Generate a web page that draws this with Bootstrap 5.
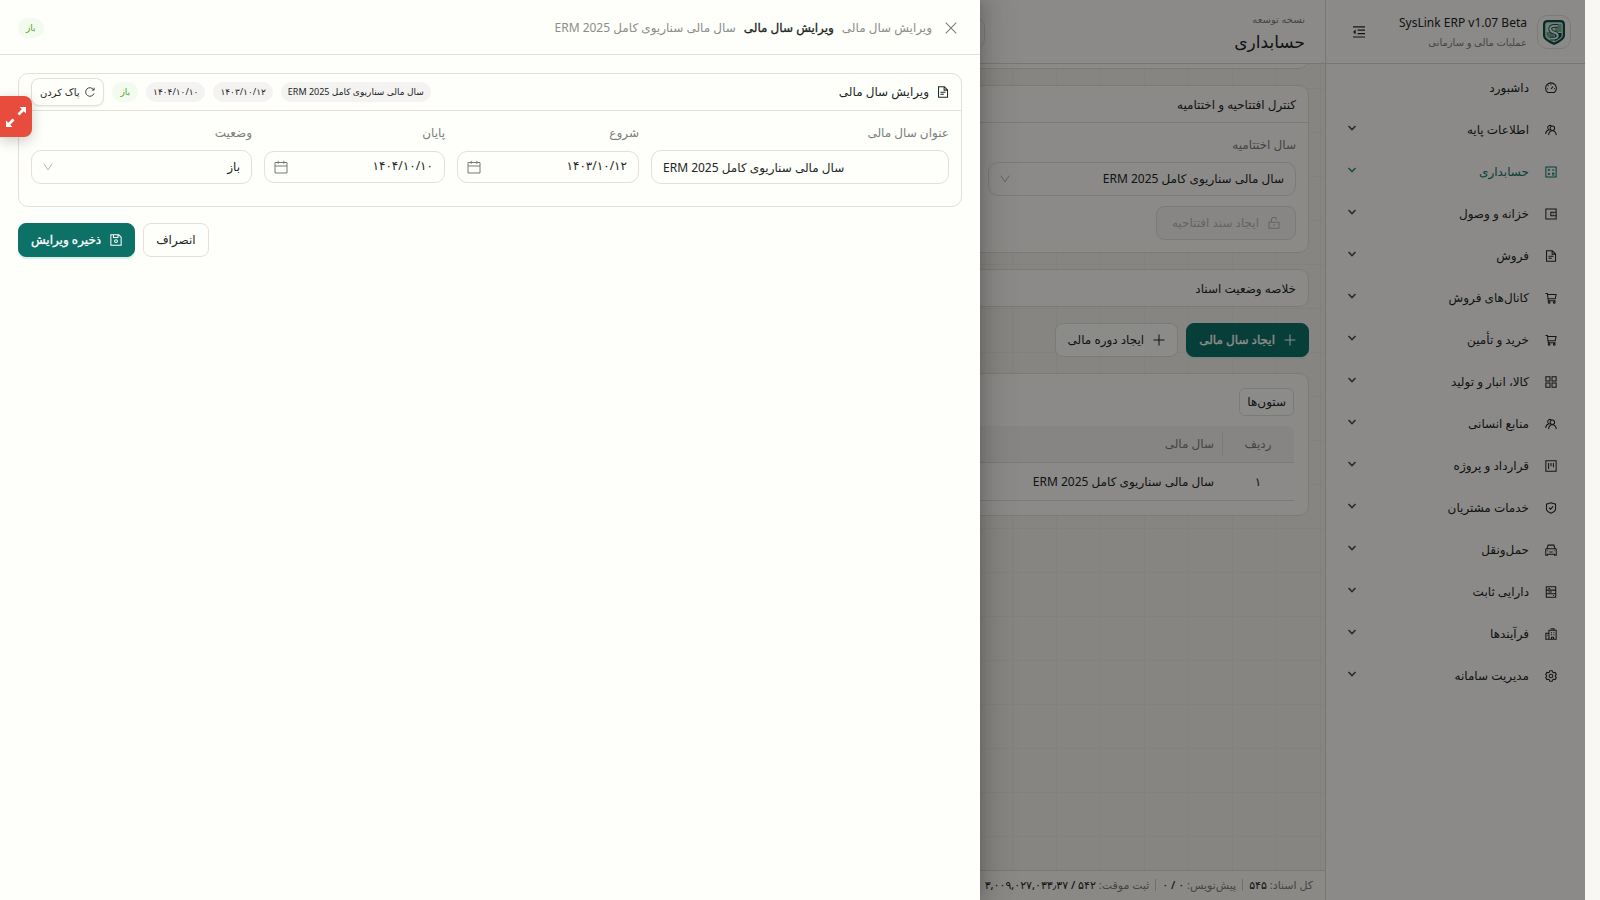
<!DOCTYPE html>
<html lang="fa" dir="rtl">
<head>
<meta charset="utf-8">
<meta name="viewport" content="width=device-width, initial-scale=1">
<title>SysLink ERP</title>
<link rel="stylesheet" href="https://cdn.jsdelivr.net/npm/bootstrap@5.3.0/dist/css/bootstrap.min.css">
<style>
:root{--line:#e4dfd8;--ink:#202624;--muted:#7b807d;--brand:#0d7168;--paper:#fefefb}
body{font-family:"Noto Sans","DejaVu Sans",sans-serif;font-size:12px;line-height:20px;color:var(--ink);background:#f8f7f3;padding-right:15px;min-height:100vh;overflow:hidden}
.ico{width:12px;height:12px;fill:none;stroke:currentColor;stroke-width:1.2;flex:none}
.shell{height:100vh;position:relative}
.side{width:260px;background:#fffcf9;border-left:1px solid #dcd7d0}
.bar{height:64px;border-bottom:1px solid #dcd7d0;flex:none;background:#fffcf9}
.side .bar{padding:0 14px 0 26px;gap:10px}
.side .bar .ico{width:14px;height:14px}
.logo{width:34px;height:34px;border:1px solid #e6ddcf;border-radius:10px}
.brandname{font-size:12px;line-height:20px}
.tiny{font-size:10px;line-height:18px;color:var(--muted)}
.menu{padding-top:3px}
.menu a{height:42px;padding:0 28px 0 21px;gap:16px;color:var(--ink);text-decoration:none}
.menu a.current{color:var(--brand)}
.menu .chev{width:10px;height:10px;stroke-width:1.6;margin-bottom:4px;opacity:.8}
.canvas{background-color:#f5f3ed;background-image:linear-gradient(#eeece6 1px,transparent 1px),linear-gradient(90deg,#eeece6 1px,transparent 1px);background-size:44px 44px;background-position:0 24px;overflow:hidden;padding:0 16px;gap:16px}
.main .bar{padding:2px 20px 0}
.heading{font-size:17px;line-height:28px;font-weight:400}
.firm{-webkit-text-stroke:.3px currentColor;font-weight:400}
.titles{width:320px;flex:none}
.finder{width:420px;height:32px;border:1px solid var(--line);border-radius:10px}
.panel{background:#fffcf9;border:1px solid var(--line);border-radius:10px;flex:none}
.panel-top{height:37px;padding:2px 12px 0;border-bottom:1px solid var(--line)}
.panel-top.alone{height:36px;border:0}
.scrolled{height:20px;margin-top:-15px}
.inner{padding:12px}
.tool{height:34px;border:1px solid var(--line);border-radius:8px;font-size:12px;line-height:20px;padding:0 12px;gap:9px;background:var(--paper);color:var(--ink)}
.tool.solid{background:var(--brand);border-color:var(--brand);color:#fff;box-shadow:0 2px 0 #d8f0e8}
.tool:disabled{background:#f6f4f0;color:#b9b6b2;border-color:var(--line);opacity:1;padding:0 15px;margin-top:10px}
.tool.cols{height:28px;padding:0 7px;border-radius:6px;margin-bottom:10px;display:block}
.table-panel{padding:14px}
.btn.tool:hover{background:#f4f3ee;color:var(--ink)}
.field{height:34px;border:1px solid var(--line);border-radius:10px;font-size:12px;padding:0 11px;background-color:transparent;color:var(--ink);width:100%}
.pick{appearance:none;padding-left:36px}
.holder{position:relative}
.holder .ico{position:absolute;left:10px;top:50%;transform:translateY(-50%);width:14px;height:14px;stroke-width:1;color:#767b78;pointer-events:none}
.holder .down{left:11px;width:12px;height:12px;stroke-width:.8;color:#b0b1ae}
.date{height:32px;padding-bottom:4px}
.lab{color:var(--muted);line-height:20px;margin-bottom:7px;display:block}
.four{display:grid;grid-template-columns:repeat(4,1fr);gap:12px}
.fields{display:grid;grid-template-columns:298fr 182fr 181fr 221fr;gap:12px;align-items:start;padding:12px 12px 22px}
.fields .holder{height:34px;display:flex;align-items:center}
.grid-table{border-collapse:separate;border-spacing:0}
.grid-table th{background:#f5f3ee;color:var(--muted);font-weight:400;height:37px;border-bottom:1px solid var(--line);padding:0 8px}
.grid-table td{height:38px;border-bottom:1px solid var(--line);padding:0 8px}
.grid-table th:first-child{border-top-right-radius:8px;background-image:linear-gradient(var(--line),var(--line));background-size:1px 22px;background-position:left center;background-repeat:no-repeat}
.grid-table th:first-child,.grid-table td:first-child{width:72px;text-align:center}
.status{height:30px;border-top:1px solid #dcd7d0;background:#fbf9f5;padding:0 12px 2px;font-size:11px;flex:none;gap:6px;color:var(--muted);white-space:nowrap}
.status b{color:var(--ink);font-weight:500}
.status .sep{width:1px;height:12px;background:#d0ccc6}
.veil{position:absolute;inset:0;background:rgba(0,0,0,.45)}
.sheet{position:absolute;inset:0 auto 0 0;width:980px;max-width:100%;background:var(--paper);box-shadow:6px 0 16px rgba(0,0,0,.12),3px 0 6px -4px rgba(0,0,0,.14),9px 0 28px 8px rgba(0,0,0,.07)}
.sheet-top{height:55px;border-bottom:1px solid var(--line);padding:2px 18px 0;gap:8px}
.sheet-top .x{border:0;background:none;padding:0 5px;color:#777b79;display:flex}
.soft{color:#8a8d8a}
.sheet-body{padding:18px}
.sheet .panel{background:transparent}
.sheet .panel-top{padding-top:0}
.pill{background:#f4f3f1;border-radius:10px;font-size:9px;line-height:20px;height:20px;padding:0 7px;white-space:nowrap}
.pill.ok{background:#f3fbee;color:#52a32c;padding:0 8px}
.tool.mini{height:28px;font-size:10px;padding:0 8px;box-shadow:0 1px 2px rgba(0,0,0,.06);gap:6px}
.mini .ico{width:10px;height:10px}
.flyout{position:absolute;left:0;top:96px;width:32px;height:41px;border:0;border-radius:0 8px 8px 0;background:#e74c3c;color:#fff;box-shadow:0 4px 14px rgba(0,0,0,.2);padding:0;display:flex;align-items:center;justify-content:center}
</style>
</head>
<body>
<svg class="d-none">
<symbol id="gauge" viewBox="0 0 14 14"><path d="M3 12.200a6.300 6.300 0 1 1 8 0z"/><path d="M7 8l2.400-2.600M7 2.600v1.200M3.200 4l.8.8M2.400 7.800h1.200M10.400 7.800h1.200"/></symbol>
<symbol id="people" viewBox="0 0 14 14"><circle cx="8.600" cy="5" r="2.600"/><path d="M4.200 13c.2-3 1.900-5.200 4.400-5.200s4.200 2.200 4.600 5.200M5.600 7A2.700 2.700 0 1 1 7.400 2.100M.8 11.600c.1-2.400 1.300-4.200 3.400-5"/></symbol>
<symbol id="book" viewBox="0 0 14 14"><path d="M1 1.200h12v11.600H1zM3.200 4.600h2.600M4.500 3.300v2.600M8.200 4.600h2.800M3.400 8.300l2.200 2.200M5.600 8.300l-2.200 2.200M8.200 8.600h2.800M8.200 10.400h2.800"/></symbol>
<symbol id="wallet" viewBox="0 0 14 14"><path d="M1 1.200h12v11.600H1zM13 5H6.800v4H13M9 7h1"/></symbol>
<symbol id="doc" viewBox="0 0 14 14"><path d="M1.800.8h6.700L12.300 4.600v8.600H1.800zM8.300.8v4h4M4 7.200h6M4 9.600h4"/></symbol>
<symbol id="cart" viewBox="0 0 14 14"><path d="M.6 1.800h2.200l1 8.400h8.600M3 3h9.900l-.9 5H3.600"/><circle cx="4.800" cy="12.200" r="1"/><circle cx="10.800" cy="12.200" r="1"/></symbol>
<symbol id="tiles" viewBox="0 0 14 14"><path d="M1 1h4.800v4.800H1zM8.200 1H13v4.800H8.200zM1 8.200h4.800V13H1zM8.200 8.200H13V13H8.200z"/></symbol>
<symbol id="board" viewBox="0 0 14 14"><path d="M1 1h12v12H1zM4.200 3.600v6.800M7 3.600v3.600M9.800 3.600v4.800" /></symbol>
<symbol id="shield" viewBox="0 0 14 14"><path d="M7 .8l5.300 1.700v6.500q-1 2.500-5.300 4.200Q2.700 11.500 1.700 9V2.500zM4.600 6.500l1.900 1.900 3-3.400"/></symbol>
<symbol id="car" viewBox="0 0 14 14"><path d="M2.200 5.800L3.600 1.300h6.800l1.400 4.500M.9 6l1-.5h10.200l1 .5v7h-2v-1H2.900v1h-2zM5 9.400h4M2.700 8h1M10.300 8h1"/></symbol>
<symbol id="server" viewBox="0 0 14 14"><path d="M1.500.8h11v12.400h-11zM1.500 4.800h11M1.500 9h11M4 2.900h2M4 7h4M9.500 11h1"/></symbol>
<symbol id="flow" viewBox="0 0 14 14"><path d="M4.600 2.600H13V13H4.600zM1 6h3.600v7H1zM6.600 1h4v1.600M7 5.500h1.200M9.800 5.500H11M7 8h1.200M9.800 8H11M7.600 13v-2.300h2.400V13M2.200 8.500h1"/></symbol>
<symbol id="gear" viewBox="0 0 14 14"><circle cx="7" cy="7" r="2.100"/><path d="M5.600.8h2.800l.5 1.700 1.200.7 1.700-.4 1.400 2.400L12 6.600v.8l1.200 1.400-1.400 2.400-1.700-.4-1.200.7-.5 1.700H5.600l-.5-1.700-1.200-.7-1.700.4L.8 8.800 2 7.400v-.8L.8 5.200l1.400-2.400 1.700.4 1.200-.7z"/></symbol>
<symbol id="fold" viewBox="0 0 14 14"><path d="M1 1.800h12M5.600 5.200H13M5.600 8.600H13M1 12h12"/><path d="M3.600 4.600v4.600L1 6.900z" fill="currentColor" stroke="none"/></symbol>
<symbol id="chev" viewBox="0 0 10 10"><path d="M1.500 3L5 6.500 8.500 3"/></symbol>
<symbol id="vee" viewBox="0 0 10 10"><path d="M1.500 2.200L5 7.400 8.500 2.200"/></symbol>
<symbol id="plus" viewBox="0 0 14 14"><path d="M7 .6v12.800M.6 7h12.800"/></symbol>
<symbol id="lock" viewBox="0 0 14 14"><path d="M1.200 6h11.600v7H1.200zM4 6V3.500a3 3 0 0 1 6-.3M7 8.600v2"/></symbol>
<symbol id="cal" viewBox="0 0 14 14"><path d="M1 2.500h12V13H1zM1 6h12M4.200.8v3M9.800.8v3"/></symbol>
<symbol id="save" viewBox="0 0 14 14"><path d="M1 1h9.200L13 3.800V13H1zM4 1.200v3h5.300v-3"/><circle cx="7" cy="8.300" r="1.700"/></symbol>
<symbol id="reload" viewBox="0 0 14 14"><path d="M12.600 9A6 6 0 1 1 12 3.800M12.800 1v3.300H9.500"/></symbol>
<symbol id="close" viewBox="0 0 14 14"><path d="M.8.8l12.400 12.400M13.200.8L.8 13.200"/></symbol>
</svg>
<div class="shell d-flex">
  <aside class="side d-flex flex-column">
    <div class="bar d-flex align-items-center">
      <svg class="logo" viewBox="0 0 34 34"><path d="M6.500 9q0-3.500 4-3.500h13q4 0 4 3.500v12q0 4-10.500 8.500Q6.500 25 6.500 21z" fill="#cfe8d8" stroke="#0b4f4a" stroke-width="2.400"/><path d="M18 8.500h7V17h-7z" fill="#7fae94"/><path d="M18 18h7v3q0 2-7 5.500z" fill="#123f40"/><path d="M9 17h8v9q-8-3-8-6z" fill="#6fa690"/><path d="M21 10.500h-3q-5 0-5 3t4 4q4 1 4 3.500t-4 3h-4" fill="none" stroke="#0b4f4a" stroke-width="4"/><path d="M21 10.500h-3q-5 0-5 3t4 4q4 1 4 3.500t-4 3h-4" fill="none" stroke="#e6f7ec" stroke-width="2"/></svg>
      <div class="flex-fill"><div class="brandname"><bdi>SysLink ERP v1.07 Beta</bdi></div><div class="tiny">عملیات مالی و سازمانی</div></div>
      <svg class="ico"><use href="#fold"/></svg>
    </div>
    <nav class="menu d-flex flex-column" aria-label="منو">
      <a href="#" class="d-flex align-items-center"><svg class="ico"><use href="#gauge"/></svg><span class="flex-fill">داشبورد</span></a>
      <a href="#" class="d-flex align-items-center"><svg class="ico"><use href="#people"/></svg><span class="flex-fill">اطلاعات پایه</span><svg class="ico chev"><use href="#chev"/></svg></a>
      <a href="#" class="d-flex align-items-center current"><svg class="ico"><use href="#book"/></svg><span class="flex-fill">حسابداری</span><svg class="ico chev"><use href="#chev"/></svg></a>
      <a href="#" class="d-flex align-items-center"><svg class="ico"><use href="#wallet"/></svg><span class="flex-fill">خزانه و وصول</span><svg class="ico chev"><use href="#chev"/></svg></a>
      <a href="#" class="d-flex align-items-center"><svg class="ico"><use href="#doc"/></svg><span class="flex-fill">فروش</span><svg class="ico chev"><use href="#chev"/></svg></a>
      <a href="#" class="d-flex align-items-center"><svg class="ico"><use href="#cart"/></svg><span class="flex-fill">کانال‌های فروش</span><svg class="ico chev"><use href="#chev"/></svg></a>
      <a href="#" class="d-flex align-items-center"><svg class="ico"><use href="#cart"/></svg><span class="flex-fill">خرید و تأمین</span><svg class="ico chev"><use href="#chev"/></svg></a>
      <a href="#" class="d-flex align-items-center"><svg class="ico"><use href="#tiles"/></svg><span class="flex-fill">کالا، انبار و تولید</span><svg class="ico chev"><use href="#chev"/></svg></a>
      <a href="#" class="d-flex align-items-center"><svg class="ico"><use href="#people"/></svg><span class="flex-fill">منابع انسانی</span><svg class="ico chev"><use href="#chev"/></svg></a>
      <a href="#" class="d-flex align-items-center"><svg class="ico"><use href="#board"/></svg><span class="flex-fill">قرارداد و پروژه</span><svg class="ico chev"><use href="#chev"/></svg></a>
      <a href="#" class="d-flex align-items-center"><svg class="ico"><use href="#shield"/></svg><span class="flex-fill">خدمات مشتریان</span><svg class="ico chev"><use href="#chev"/></svg></a>
      <a href="#" class="d-flex align-items-center"><svg class="ico"><use href="#car"/></svg><span class="flex-fill">حمل‌ونقل</span><svg class="ico chev"><use href="#chev"/></svg></a>
      <a href="#" class="d-flex align-items-center"><svg class="ico"><use href="#server"/></svg><span class="flex-fill">دارایی ثابت</span><svg class="ico chev"><use href="#chev"/></svg></a>
      <a href="#" class="d-flex align-items-center"><svg class="ico"><use href="#flow"/></svg><span class="flex-fill">فرآیندها</span><svg class="ico chev"><use href="#chev"/></svg></a>
      <a href="#" class="d-flex align-items-center"><svg class="ico"><use href="#gear"/></svg><span class="flex-fill">مدیریت سامانه</span><svg class="ico chev"><use href="#chev"/></svg></a>
    </nav>
  </aside>
  <div class="main d-flex flex-column flex-fill">
    <header class="bar d-flex align-items-center">
      <div class="titles"><div class="tiny">نسخه توسعه</div><h1 class="heading m-0">حسابداری</h1></div>
      <div class="finder"></div>
    </header>
    <main class="canvas d-flex flex-column flex-fill">
      <div class="panel scrolled"></div>
      <section class="panel">
        <div class="panel-top d-flex align-items-center">کنترل افتتاحیه و اختتامیه</div>
        <div class="inner">
          <div class="four"><div>
            <label class="lab" for="closing">سال اختتامیه</label>
            <div class="holder"><select class="field pick" id="closing"><option>سال مالی سناریوی کامل ERM 2025</option></select><svg class="ico down"><use href="#vee"/></svg></div>
          </div></div>
          <button class="btn tool d-flex align-items-center" disabled><svg class="ico"><use href="#lock"/></svg>ایجاد سند افتتاحیه</button>
        </div>
      </section>
      <section class="panel"><div class="panel-top alone d-flex align-items-center">خلاصه وضعیت اسناد</div></section>
      <div class="d-flex gap-2">
        <button class="btn tool solid d-flex align-items-center firm"><svg class="ico"><use href="#plus"/></svg>ایجاد سال مالی</button>
        <button class="btn tool d-flex align-items-center"><svg class="ico"><use href="#plus"/></svg>ایجاد دوره مالی</button>
      </div>
      <section class="panel table-panel">
        <button class="btn tool cols">ستون‌ها</button>
        <table class="grid-table w-100">
          <thead><tr><th>ردیف</th><th>سال مالی</th></tr></thead>
          <tbody><tr><td>۱</td><td>سال مالی سناریوی کامل ERM 2025</td></tr></tbody>
        </table>
      </section>
    </main>
    <footer class="status d-flex align-items-center"><span>کل اسناد: <b>۵۴۵</b></span><span class="sep"></span><span>پیش‌نویس: <b>۰ / ۰</b></span><span class="sep"></span><span>ثبت موقت: <b>۵۴۲ / ۳,۰۰۹,۰۲۷,۰۳۳٫۳۷</b></span></footer>
  </div>
  <div class="veil"></div>
  <section class="sheet" role="dialog" aria-label="ویرایش سال مالی">
    <div class="sheet-top d-flex align-items-center">
      <button class="x" aria-label="بستن"><svg class="ico"><use href="#close"/></svg></button>
      <span class="soft">ویرایش سال مالی</span><strong class="firm">ویرایش سال مالی</strong><span class="soft">سال مالی سناریوی کامل ERM 2025</span>
      <span class="pill ok me-auto">باز</span>
    </div>
    <div class="sheet-body">
      <div class="panel">
        <div class="panel-top d-flex align-items-center gap-2"><svg class="ico"><use href="#doc"/></svg><span class="ms-auto">ویرایش سال مالی</span>
          <span class="pill">سال مالی سناریوی کامل ERM 2025</span><span class="pill">۱۴۰۳/۱۰/۱۲</span><span class="pill">۱۴۰۴/۱۰/۱۰</span><span class="pill ok">باز</span>
          <button class="btn tool mini d-flex align-items-center"><svg class="ico"><use href="#reload"/></svg>پاک کردن</button>
        </div>
        <div class="fields">
          <div><label class="lab" for="name">عنوان سال مالی</label><input class="field text-start" id="name" value="سال مالی سناریوی کامل ERM 2025"></div>
          <div><label class="lab" for="from">شروع</label><div class="holder"><input class="field date" id="from" value="۱۴۰۳/۱۰/۱۲"><svg class="ico"><use href="#cal"/></svg></div></div>
          <div><label class="lab" for="to">پایان</label><div class="holder"><input class="field date" id="to" value="۱۴۰۴/۱۰/۱۰"><svg class="ico"><use href="#cal"/></svg></div></div>
          <div><label class="lab" for="state">وضعیت</label><div class="holder"><select class="field pick" id="state"><option>باز</option></select><svg class="ico down"><use href="#vee"/></svg></div></div>
        </div>
      </div>
      <div class="d-flex gap-2 mt-3 justify-content-end">
        <button class="btn tool">انصراف</button>
        <button class="btn tool solid d-flex align-items-center firm"><svg class="ico"><use href="#save"/></svg>ذخیره ویرایش</button>
      </div>
    </div>
    <button class="flyout" aria-label="بزرگ‌نمایی"><svg width="20" height="20" viewBox="0 0 20 20" fill="#fff"><path d="M13.500 0H20v6.500l-2.300-2.300-4.200 4.300-2-2 4.300-4.200zM6.500 20H0v-6.500l2.300 2.300 4.200-4.300 2 2-4.300 4.200z"/></svg></button>
  </section>
</div>
<script src="https://cdn.jsdelivr.net/npm/bootstrap@5.3.0/dist/js/bootstrap.bundle.min.js"></script>
</body>
</html>
